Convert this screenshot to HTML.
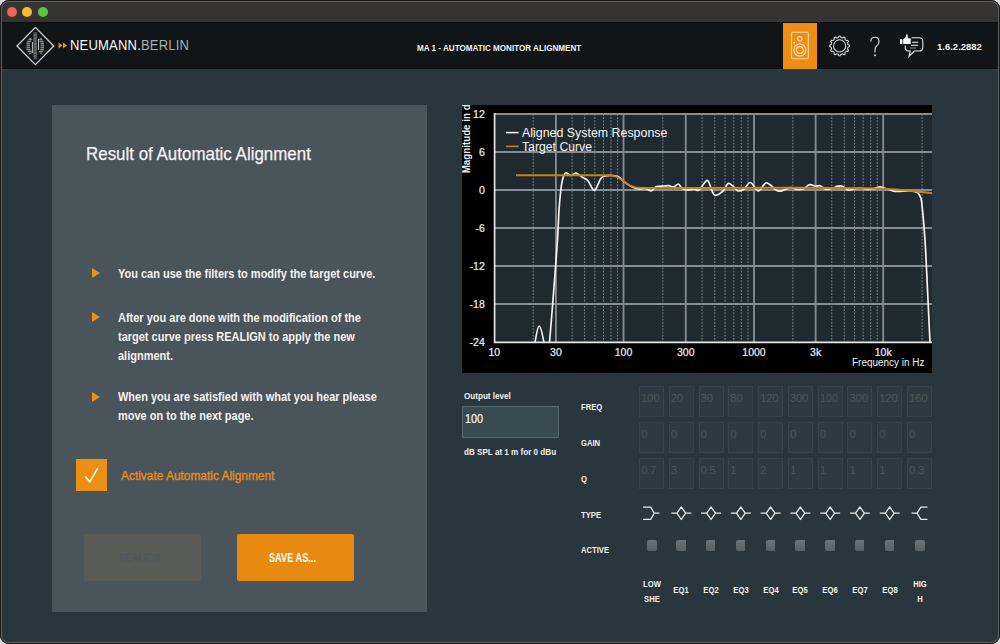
<!DOCTYPE html>
<html><head><meta charset="utf-8">
<style>
*{margin:0;padding:0;box-sizing:border-box}
html,body{width:1000px;height:644px;overflow:hidden;background:#d9d9d9;font-family:"Liberation Sans",sans-serif}
.win{position:absolute;left:0;top:0;width:1000px;height:644px;background:#2a363e;border-radius:9px;overflow:hidden}
.frame{position:absolute;left:0;top:0;width:1000px;height:644px;border-radius:9px;box-shadow:inset 0 0 0 1px #1a1a1a,inset 0 0 0 2px #5a5f62}
.tb{position:absolute;left:0;top:0;width:1000px;height:23px;background:#363433;border-bottom:1px solid #0c0c0c}
.dot{position:absolute;top:6.8px;width:10px;height:10px;border-radius:50%}
.hd{position:absolute;left:0;top:23px;width:1000px;height:46px;background:#111518;box-shadow:inset 0 -1px 0 #0a0d0f,0 1.5px 0 #2f3b42}
.a{position:absolute;white-space:nowrap}
.s{display:inline-block;transform-origin:0 0}
.panel{position:absolute;left:52px;top:105px;width:375px;height:507px;background:#4a545b}
.w{color:#f2f2f2}
.box{position:absolute;width:25px;height:31px;background:#2d3a41;border:1px solid #37444b}
.box span{position:absolute;left:1px;top:4px;font-size:11.5px;line-height:14px;color:#4b575d;letter-spacing:-0.3px}
.lbl{position:absolute;font-size:9px;line-height:10px;font-weight:bold;color:#f0f0f0;white-space:nowrap}
.chk{position:absolute;top:539.5px;width:10.6px;height:11px;border-radius:2px;background:linear-gradient(#6b7479,#586166)}
.bl{position:absolute;width:30px;text-align:center;font-size:9px;line-height:10px;font-weight:bold;color:#f0f0f0}
.bt{position:absolute;font-size:13px;line-height:19.2px;font-weight:bold;color:#f2f2f2;white-space:nowrap}
.tri{position:absolute;left:92px;width:0;height:0;border-left:8px solid #ed8f13;border-top:5.6px solid transparent;border-bottom:5.6px solid transparent}
</style></head><body>
<div class="win">
  <div class="tb">
    <div class="dot" style="left:6.8px;background:#f0625a"></div>
    <div class="dot" style="left:22.3px;background:#f8bb32"></div>
    <div class="dot" style="left:37.8px;background:#5ec440"></div>
  </div>
  <div class="hd">
    <!-- logo -->
    <svg class="a" style="left:14px;top:4px" width="44" height="40" viewBox="14 27 44 40">
      <path d="M35.4 27.4 L53.8 46 L35.4 64.6 L17 46 Z" fill="none" stroke="#cdcdcd" stroke-width="1.35"/>
      <g fill="none" stroke="#8a8a8a" stroke-width="3.4" stroke-linejoin="miter">
        <path d="M31.2 38.6 L28.2 42.6 L28.2 49.4 L31.2 53.4"/>
        <path d="M39.8 38.6 L42.3 42.6 L42.3 49.4 L39.8 53.4"/>
      </g>
      <g stroke="#1a1a1a" stroke-width="0.6">
        <path d="M26 40.5h7M26 42.5h7M26 44.5h7M26 46.5h7M26 48.5h7M26 50.5h7M26 52.5h7M38 40.5h7M38 42.5h7M38 44.5h7M38 46.5h7M38 48.5h7M38 50.5h7M38 52.5h7"/>
      </g>
      <rect x="33.3" y="32.2" width="3.8" height="27.2" fill="#505050"/>
      <g stroke="#9a9a9a" stroke-width="0.7">
        <path d="M33.9 35h2.6M33.9 38h2.6M34.4 41h1.6M33.9 44h2.6M33.9 47h2.6M34.4 50h1.6M33.9 53h2.6M33.9 56h2.6"/>
      </g>
      <path d="M32.4 42 V53 M38.5 39 V50" stroke="#d8d8d8" stroke-width="0.9"/>
    </svg>
    <svg class="a" style="left:58px;top:19px" width="10" height="8" viewBox="0 0 10 8">
      <path d="M0.5 0.5 L4.5 3.5 L0.5 6.5Z M5 0.5 L9 3.5 L5 6.5Z" fill="#f0900c"/>
    </svg>
    <div class="a" style="left:70px;top:14px;font-size:14px;line-height:16px;letter-spacing:0.2px"><span class="s" id="logo" style="transform:scaleX(0.93)"><span style="color:#f4f4f4">NEUMANN.</span><span style="color:#a9aeb1">BERLIN</span></span></div>
    <div class="a" style="left:417px;top:19.6px;font-size:9px;line-height:10px;font-weight:bold;color:#f2f2f2"><span class="s" style="transform:scaleX(0.9)">MA 1 - AUTOMATIC MONITOR ALIGNMENT</span></div>
    <!-- speaker tab -->
    <div class="a" style="left:783px;top:0;width:34px;height:46px;background:#ed8e12"></div>
    <svg class="a" style="left:783px;top:0" width="34" height="46" viewBox="783 23 34 46">
      <g fill="none" stroke="#f8dcb6" stroke-width="1.1">
        <rect x="791.5" y="32.3" width="16.8" height="26.4" rx="1.2"/>
        <circle cx="799.8" cy="38.7" r="2.2"/>
        <circle cx="799.8" cy="50" r="6"/>
        <circle cx="799.8" cy="50" r="3.4"/>
      </g>
      <circle cx="794.2" cy="42.6" r="0.9" fill="#fff"/>
    </svg>
    <!-- gear -->
    <svg class="a" style="left:826px;top:10px" width="28" height="28" viewBox="825.3 33 28 28" id="gear"><path d="M836.70 37.69 L837.57 37.50 L838.28 36.02 L839.52 36.02 L840.23 37.50 L841.10 37.69 L841.95 37.96 L843.30 37.03 L844.38 37.65 L844.25 39.29 L844.91 39.89 L845.51 40.55 L847.15 40.42 L847.77 41.50 L846.84 42.85 L847.11 43.70 L847.30 44.57 L848.78 45.28 L848.78 46.52 L847.30 47.23 L847.11 48.10 L846.84 48.95 L847.77 50.30 L847.15 51.38 L845.51 51.25 L844.91 51.91 L844.25 52.51 L844.38 54.15 L843.30 54.77 L841.95 53.84 L841.10 54.11 L840.23 54.30 L839.52 55.78 L838.28 55.78 L837.57 54.30 L836.70 54.11 L835.85 53.84 L834.50 54.77 L833.42 54.15 L833.55 52.51 L832.89 51.91 L832.29 51.25 L830.65 51.38 L830.03 50.30 L830.96 48.95 L830.69 48.10 L830.50 47.23 L829.02 46.52 L829.02 45.28 L830.50 44.57 L830.69 43.70 L830.96 42.85 L830.03 41.50 L830.65 40.42 L832.29 40.55 L832.89 39.89 L833.55 39.29 L833.42 37.65 L834.50 37.03 L835.85 37.96Z" fill="none" stroke="#d6d6d6" stroke-width="1.1" stroke-linejoin="round"/><circle cx="838.9" cy="45.9" r="6.1" fill="none" stroke="#d6d6d6" stroke-width="1.1"/></svg>
    <svg class="a" style="left:866px;top:10px" width="18" height="26" viewBox="866 33 18 26"><path d="M870.9 41.2 Q870.9 37.2 874.9 37.2 Q879 37.2 879 41.4 Q879 44.2 876.6 46 Q875 47.2 875 49.6 V52" fill="none" stroke="#dadada" stroke-width="1.15" stroke-linecap="round"/><circle cx="875" cy="55.2" r="0.95" fill="#e0e0e0"/></svg>
    <!-- thumbs chat -->
    <svg class="a" style="left:898px;top:9px" width="28" height="28" viewBox="898 32 28 28">
      <path d="M900 39.2h2.4v4.8h-2.4z" fill="#fff"/>
      <path d="M903.2 44 V39.2 L905.8 37 L906.3 34.3 L907.6 34.5 L907.8 38.2 L910.8 38.6 L910.6 44 Z" fill="#fff"/>
      <path d="M911.5 37.8 H919.2 Q922.8 37.8 922.8 41.4 V47.4 Q922.8 51 919.2 51 H914.3 L909 56.4 L910.3 51 H908.9 Q905.3 51 905.3 47.4 V45.6" fill="none" stroke="#e6e6e6" stroke-width="1.1"/>
      <path d="M912.2 42.3h6M911 45.2h7.2" stroke="#fff" stroke-width="1.1"/>
      <path d="M909.6 48h6.6" stroke="#888" stroke-width="1.1"/>
    </svg>
    <div class="a" style="left:937px;top:19px;font-size:9.5px;line-height:10px;font-weight:bold;color:#f2f2f2">1.6.2.2882</div>
  </div>

  <!-- panel -->
  <div class="panel"></div>
  <div class="a" style="left:85.5px;top:144.2px;font-size:18.5px;line-height:20px;color:#f2f2f2;-webkit-text-stroke:0.25px #f2f2f2"><span class="s" style="transform:scaleX(0.915)">Result of Automatic Alignment</span></div>
  <div class="tri" style="top:268.2px"></div>
  <div class="tri" style="top:312px"></div>
  <div class="tri" style="top:391.6px"></div>
  <div class="bt" style="left:117.6px;top:264px"><span class="s" style="transform:scaleX(0.845)">You can use the filters to modify the target curve.</span></div>
  <div class="bt" style="left:117.6px;top:307.7px"><span class="s" style="transform:scaleX(0.845)">After you are done with the modification of the<br>target curve press REALIGN to apply the new<br>alignment.</span></div>
  <div class="bt" style="left:117.6px;top:387.2px"><span class="s" style="transform:scaleX(0.845)">When you are satisfied with what you hear please<br>move on to the next page.</span></div>
  <div class="a" style="left:75.6px;top:459px;width:31.4px;height:31.5px;background:#ed8f13"></div>
  <svg class="a" style="left:76px;top:460px" width="31" height="31" viewBox="76 460 31 31"><path d="M85.2 476.6 L89.8 481.8 L97.6 468.3" fill="none" stroke="#fff" stroke-width="1.5"/></svg>
  <div class="a" style="left:121px;top:468px;font-size:13px;line-height:16px;color:#e98d14;-webkit-text-stroke:0.35px #e98d14"><span class="s" style="transform:scaleX(0.915)">Activate Automatic Alignment</span></div>
  <div class="a" style="left:84px;top:534px;width:116.5px;height:46.5px;background:#595b56;border-radius:1px"></div>
  <div class="a" style="left:119.4px;top:551px;font-size:12px;line-height:14px;font-weight:bold;color:#4f575c"><span class="s" style="transform:scaleX(0.76)">REALIGN</span></div>
  <div class="a" style="left:236.5px;top:534px;width:117px;height:46.7px;background:#e98a10;border-radius:2px"></div>
  <div class="a" style="left:268.7px;top:551px;font-size:12px;line-height:14px;font-weight:bold;color:#fff"><span class="s" style="transform:scaleX(0.765)">SAVE AS...</span></div>

  <svg class="a" style="left:462px;top:105px" width="470" height="268" viewBox="462 105 470 268">
<rect x="462" y="105" width="470" height="268" fill="#000"/>
<rect x="494.5" y="113.5" width="437.5" height="228.5" fill="#1f2930"/>
<line x1="533.19" y1="114" x2="533.19" y2="342" stroke="#a6acaf" stroke-width="1" stroke-dasharray="1.8 1.4" opacity="0.7"/>
<line x1="572.09" y1="114" x2="572.09" y2="342" stroke="#a6acaf" stroke-width="1" stroke-dasharray="1.8 1.4" opacity="0.7"/>
<line x1="584.61" y1="114" x2="584.61" y2="342" stroke="#a6acaf" stroke-width="1" stroke-dasharray="1.8 1.4" opacity="0.7"/>
<line x1="594.84" y1="114" x2="594.84" y2="342" stroke="#a6acaf" stroke-width="1" stroke-dasharray="1.8 1.4" opacity="0.7"/>
<line x1="603.49" y1="114" x2="603.49" y2="342" stroke="#a6acaf" stroke-width="1" stroke-dasharray="1.8 1.4" opacity="0.7"/>
<line x1="610.98" y1="114" x2="610.98" y2="342" stroke="#a6acaf" stroke-width="1" stroke-dasharray="1.8 1.4" opacity="0.7"/>
<line x1="617.59" y1="114" x2="617.59" y2="342" stroke="#a6acaf" stroke-width="1" stroke-dasharray="1.8 1.4" opacity="0.7"/>
<line x1="662.78" y1="114" x2="662.78" y2="342" stroke="#a6acaf" stroke-width="1" stroke-dasharray="1.8 1.4" opacity="0.7"/>
<line x1="702.07" y1="114" x2="702.07" y2="342" stroke="#a6acaf" stroke-width="1" stroke-dasharray="1.8 1.4" opacity="0.7"/>
<line x1="714.72" y1="114" x2="714.72" y2="342" stroke="#a6acaf" stroke-width="1" stroke-dasharray="1.8 1.4" opacity="0.7"/>
<line x1="725.05" y1="114" x2="725.05" y2="342" stroke="#a6acaf" stroke-width="1" stroke-dasharray="1.8 1.4" opacity="0.7"/>
<line x1="733.79" y1="114" x2="733.79" y2="342" stroke="#a6acaf" stroke-width="1" stroke-dasharray="1.8 1.4" opacity="0.7"/>
<line x1="741.35" y1="114" x2="741.35" y2="342" stroke="#a6acaf" stroke-width="1" stroke-dasharray="1.8 1.4" opacity="0.7"/>
<line x1="748.03" y1="114" x2="748.03" y2="342" stroke="#a6acaf" stroke-width="1" stroke-dasharray="1.8 1.4" opacity="0.7"/>
<line x1="792.89" y1="114" x2="792.89" y2="342" stroke="#a6acaf" stroke-width="1" stroke-dasharray="1.8 1.4" opacity="0.7"/>
<line x1="831.79" y1="114" x2="831.79" y2="342" stroke="#a6acaf" stroke-width="1" stroke-dasharray="1.8 1.4" opacity="0.7"/>
<line x1="844.31" y1="114" x2="844.31" y2="342" stroke="#a6acaf" stroke-width="1" stroke-dasharray="1.8 1.4" opacity="0.7"/>
<line x1="854.54" y1="114" x2="854.54" y2="342" stroke="#a6acaf" stroke-width="1" stroke-dasharray="1.8 1.4" opacity="0.7"/>
<line x1="863.19" y1="114" x2="863.19" y2="342" stroke="#a6acaf" stroke-width="1" stroke-dasharray="1.8 1.4" opacity="0.7"/>
<line x1="870.68" y1="114" x2="870.68" y2="342" stroke="#a6acaf" stroke-width="1" stroke-dasharray="1.8 1.4" opacity="0.7"/>
<line x1="877.29" y1="114" x2="877.29" y2="342" stroke="#a6acaf" stroke-width="1" stroke-dasharray="1.8 1.4" opacity="0.7"/>
<line x1="922.09" y1="114" x2="922.09" y2="342" stroke="#a6acaf" stroke-width="1" stroke-dasharray="1.8 1.4" opacity="0.7"/>
<line x1="555.94" y1="113" x2="555.94" y2="342" stroke="#838a8d" stroke-width="1.9"/>
<line x1="623.50" y1="113" x2="623.50" y2="342" stroke="#838a8d" stroke-width="1.9"/>
<line x1="685.76" y1="113" x2="685.76" y2="342" stroke="#838a8d" stroke-width="1.9"/>
<line x1="754.00" y1="113" x2="754.00" y2="342" stroke="#838a8d" stroke-width="1.9"/>
<line x1="815.64" y1="113" x2="815.64" y2="342" stroke="#838a8d" stroke-width="1.9"/>
<line x1="883.20" y1="113" x2="883.20" y2="342" stroke="#838a8d" stroke-width="1.9"/>
<line x1="494.5" y1="114.00" x2="932" y2="114.00" stroke="#868d90" stroke-width="1.9"/>
<line x1="494.5" y1="152.00" x2="932" y2="152.00" stroke="#868d90" stroke-width="1.9"/>
<line x1="494.5" y1="228.00" x2="932" y2="228.00" stroke="#868d90" stroke-width="1.9"/>
<line x1="494.5" y1="266.00" x2="932" y2="266.00" stroke="#868d90" stroke-width="1.9"/>
<line x1="494.5" y1="304.00" x2="932" y2="304.00" stroke="#868d90" stroke-width="1.9"/>
<line x1="494.5" y1="190" x2="932" y2="190" stroke="#868d90" stroke-width="1.9"/>
<line x1="494.6" y1="113" x2="494.6" y2="343" stroke="#e6e6e6" stroke-width="1.7"/>
<line x1="494" y1="342.3" x2="932" y2="342.3" stroke="#e6e6e6" stroke-width="1.7"/>
<path d="M549.50 342.50 C550.08 335.42 551.67 317.08 553.00 300.00 C554.33 282.92 556.50 255.00 557.50 240.00 C558.50 225.00 558.33 219.17 559.00 210.00 C559.67 200.83 560.67 190.83 561.50 185.00 C562.33 179.17 563.25 177.03 564.00 175.00 C564.75 172.97 564.83 172.72 566.00 172.80 C567.17 172.88 569.33 175.47 571.00 175.50 C572.67 175.53 574.00 172.65 576.00 173.00 C578.00 173.35 581.00 176.30 583.00 177.60 C585.00 178.90 586.10 178.67 588.00 180.80 C589.90 182.93 592.27 190.80 594.40 190.40 C596.53 190.00 598.93 180.80 600.80 178.40 C602.67 176.00 603.73 176.48 605.60 176.00 C607.47 175.52 609.87 175.37 612.00 175.50 C614.13 175.63 616.27 175.65 618.40 176.80 C620.53 177.95 622.40 180.67 624.80 182.40 C627.20 184.13 630.27 186.07 632.80 187.20 C635.33 188.33 638.00 189.00 640.00 189.20 C642.00 189.40 642.93 188.13 644.80 188.40 C646.67 188.67 649.33 191.07 651.20 190.80 C653.07 190.53 653.87 187.60 656.00 186.80 C658.13 186.00 661.87 186.18 664.00 186.00 C666.13 185.82 667.20 185.57 668.80 185.70 C670.40 185.83 672.00 187.08 673.60 186.80 C675.20 186.52 677.07 183.80 678.40 184.00 C679.73 184.20 680.27 187.00 681.60 188.00 C682.93 189.00 684.27 189.80 686.40 190.00 C688.53 190.20 692.27 189.20 694.40 189.20 C696.53 189.20 697.07 191.47 699.20 190.00 C701.33 188.53 705.07 180.27 707.20 180.40 C709.33 180.53 710.67 188.32 712.00 190.80 C713.33 193.28 713.33 195.30 715.20 195.30 C717.07 195.30 721.07 192.75 723.20 190.80 C725.33 188.85 726.40 184.40 728.00 183.60 C729.60 182.80 731.20 184.80 732.80 186.00 C734.40 187.20 735.73 190.27 737.60 190.80 C739.47 191.33 741.87 190.58 744.00 189.20 C746.13 187.82 748.00 182.23 750.40 182.50 C752.80 182.77 755.73 190.75 758.40 190.80 C761.07 190.85 763.47 182.93 766.40 182.80 C769.33 182.67 773.60 188.62 776.00 190.00 C778.40 191.38 778.40 191.50 780.80 191.10 C783.20 190.70 787.62 187.87 790.40 187.60 C793.18 187.33 795.32 189.32 797.50 189.50 C799.68 189.68 801.50 189.50 803.50 188.70 C805.50 187.90 807.50 185.12 809.50 184.70 C811.50 184.28 813.75 186.03 815.50 186.20 C817.25 186.37 818.25 185.20 820.00 185.70 C821.75 186.20 824.00 188.77 826.00 189.20 C828.00 189.63 830.00 188.80 832.00 188.30 C834.00 187.80 836.25 186.55 838.00 186.20 C839.75 185.85 840.75 185.53 842.50 186.20 C844.25 186.87 846.50 189.78 848.50 190.20 C850.50 190.62 852.25 189.02 854.50 188.70 C856.75 188.38 859.75 188.17 862.00 188.30 C864.25 188.43 866.00 189.43 868.00 189.50 C870.00 189.57 872.00 189.13 874.00 188.70 C876.00 188.27 878.00 186.90 880.00 186.90 C882.00 186.90 883.50 187.97 886.00 188.70 C888.50 189.43 891.00 190.92 895.00 191.30 C899.00 191.68 906.27 190.80 910.00 191.00 C913.73 191.20 915.67 191.50 917.40 192.50 C919.13 193.50 919.63 194.92 920.40 197.00 C921.17 199.08 921.23 197.83 922.00 205.00 C922.77 212.17 924.00 224.17 925.00 240.00 C926.00 255.83 927.17 282.92 928.00 300.00 C928.83 317.08 929.67 335.42 930.00 342.50" fill="none" stroke="#f4f4f4" stroke-width="1.7"/>
<path d="M516.00 175.20 C523.33 175.20 545.00 175.20 560.00 175.20 C575.00 175.20 597.33 175.13 606.00 175.20 C614.67 175.27 610.00 175.22 612.00 175.60 C614.00 175.98 616.00 176.52 618.00 177.50 C620.00 178.48 622.00 180.17 624.00 181.50 C626.00 182.83 628.00 184.52 630.00 185.50 C632.00 186.48 633.50 187.00 636.00 187.40 C638.50 187.80 634.33 187.80 645.00 187.90 C655.67 188.00 675.83 188.03 700.00 188.00 C724.17 187.97 759.50 187.58 790.00 187.70 C820.50 187.82 859.33 187.78 883.00 188.70 C906.67 189.62 923.83 192.45 932.00 193.20" fill="none" stroke="#c98119" stroke-width="1.9"/>
<path d="M535 342.5 C536.5 335 537.5 326 539.2 326 C541 326 542.5 335 544 342.5" fill="none" stroke="#f4f4f4" stroke-width="1.6"/>
<line x1="506" y1="132.6" x2="518.6" y2="132.6" stroke="#f4f4f4" stroke-width="1.6"/>
<line x1="506" y1="146.4" x2="518.6" y2="146.4" stroke="#c98119" stroke-width="1.6"/>
<text x="522" y="137.4" font-size="13" fill="#f4f4f4" textLength="145.4" lengthAdjust="spacingAndGlyphs">Aligned System Response</text>
<text x="522" y="150.6" font-size="13" fill="#f4f4f4" textLength="70" lengthAdjust="spacingAndGlyphs">Target Curve</text>
<text x="484.8" y="117.80" font-size="10.5" fill="#f0f0f0" stroke="#f0f0f0" stroke-width="0.2" text-anchor="end">12</text>
<text x="484.8" y="155.80" font-size="10.5" fill="#f0f0f0" stroke="#f0f0f0" stroke-width="0.2" text-anchor="end">6</text>
<text x="484.8" y="193.80" font-size="10.5" fill="#f0f0f0" stroke="#f0f0f0" stroke-width="0.2" text-anchor="end">0</text>
<text x="484.8" y="231.80" font-size="10.5" fill="#f0f0f0" stroke="#f0f0f0" stroke-width="0.2" text-anchor="end">-6</text>
<text x="484.8" y="269.80" font-size="10.5" fill="#f0f0f0" stroke="#f0f0f0" stroke-width="0.2" text-anchor="end">-12</text>
<text x="484.8" y="307.80" font-size="10.5" fill="#f0f0f0" stroke="#f0f0f0" stroke-width="0.2" text-anchor="end">-18</text>
<text x="484.8" y="345.80" font-size="10.5" fill="#f0f0f0" stroke="#f0f0f0" stroke-width="0.2" text-anchor="end">-24</text>
<text x="494.30" y="356.3" font-size="10.5" fill="#f0f0f0" stroke="#f0f0f0" stroke-width="0.2" text-anchor="middle">10</text>
<text x="555.94" y="356.3" font-size="10.5" fill="#f0f0f0" stroke="#f0f0f0" stroke-width="0.2" text-anchor="middle">30</text>
<text x="623.50" y="356.3" font-size="10.5" fill="#f0f0f0" stroke="#f0f0f0" stroke-width="0.2" text-anchor="middle">100</text>
<text x="685.76" y="356.3" font-size="10.5" fill="#f0f0f0" stroke="#f0f0f0" stroke-width="0.2" text-anchor="middle">300</text>
<text x="754.00" y="356.3" font-size="10.5" fill="#f0f0f0" stroke="#f0f0f0" stroke-width="0.2" text-anchor="middle">1000</text>
<text x="815.64" y="356.3" font-size="10.5" fill="#f0f0f0" stroke="#f0f0f0" stroke-width="0.2" text-anchor="middle">3k</text>
<text x="883.20" y="356.3" font-size="10.5" fill="#f0f0f0" stroke="#f0f0f0" stroke-width="0.2" text-anchor="middle">10k</text>
<text x="924.5" y="366.3" font-size="10" fill="#f0f0f0" text-anchor="end" textLength="72.5" lengthAdjust="spacingAndGlyphs">Frequency in Hz</text>
<text transform="translate(470.3 173.3) rotate(-90)" font-size="10.2" font-weight="bold" fill="#f0f0f0" textLength="76" lengthAdjust="spacingAndGlyphs">Magnitude in dB</text>
<rect x="455" y="98" width="20" height="7" fill="#2a363e"/>
</svg>

  <div class="a" style="left:464.3px;top:391.2px;font-size:9px;line-height:10px;font-weight:bold;color:#f0f0f0"><span class="s" style="transform:scaleX(0.9)">Output level</span></div>
  <div class="a" style="left:462px;top:406px;width:97px;height:31.5px;background:#3a4a51;border:1.5px solid #566870"></div>
  <div class="a" style="left:465.3px;top:411.8px;font-size:12px;line-height:14px;color:#f8f8f8;-webkit-text-stroke:0.2px #f8f8f8"><span class="s" style="transform:scaleX(0.9)">100</span></div>
  <div class="a" style="left:464.3px;top:447.2px;font-size:9px;line-height:10px;font-weight:bold;color:#f0f0f0"><span class="s" style="transform:scaleX(0.9)">dB SPL at 1 m for 0 dBu</span></div>

  <div class="box" style="left:639.00px;top:386.0px"><span>100</span></div>
<div class="box" style="left:668.78px;top:386.0px"><span>20</span></div>
<div class="box" style="left:698.56px;top:386.0px"><span>30</span></div>
<div class="box" style="left:728.34px;top:386.0px"><span>80</span></div>
<div class="box" style="left:758.12px;top:386.0px"><span>120</span></div>
<div class="box" style="left:787.90px;top:386.0px"><span>300</span></div>
<div class="box" style="left:817.68px;top:386.0px"><span>100</span></div>
<div class="box" style="left:847.46px;top:386.0px"><span>300</span></div>
<div class="box" style="left:877.24px;top:386.0px"><span>120</span></div>
<div class="box" style="left:907.02px;top:386.0px"><span>160</span></div>
<div class="box" style="left:639.00px;top:422.0px"><span>0</span></div>
<div class="box" style="left:668.78px;top:422.0px"><span>0</span></div>
<div class="box" style="left:698.56px;top:422.0px"><span>0</span></div>
<div class="box" style="left:728.34px;top:422.0px"><span>0</span></div>
<div class="box" style="left:758.12px;top:422.0px"><span>0</span></div>
<div class="box" style="left:787.90px;top:422.0px"><span>0</span></div>
<div class="box" style="left:817.68px;top:422.0px"><span>0</span></div>
<div class="box" style="left:847.46px;top:422.0px"><span>0</span></div>
<div class="box" style="left:877.24px;top:422.0px"><span>0</span></div>
<div class="box" style="left:907.02px;top:422.0px"><span>0</span></div>
<div class="box" style="left:639.00px;top:457.8px"><span>0.7</span></div>
<div class="box" style="left:668.78px;top:457.8px"><span>3</span></div>
<div class="box" style="left:698.56px;top:457.8px"><span>0.5</span></div>
<div class="box" style="left:728.34px;top:457.8px"><span>1</span></div>
<div class="box" style="left:758.12px;top:457.8px"><span>2</span></div>
<div class="box" style="left:787.90px;top:457.8px"><span>1</span></div>
<div class="box" style="left:817.68px;top:457.8px"><span>1</span></div>
<div class="box" style="left:847.46px;top:457.8px"><span>1</span></div>
<div class="box" style="left:877.24px;top:457.8px"><span>1</span></div>
<div class="box" style="left:907.02px;top:457.8px"><span>0.3</span></div>
<div class="lbl" style="left:580.5px;top:402.3px"><span class="s" style="transform:scaleX(0.85)">FREQ</span></div>
<div class="lbl" style="left:580.5px;top:437.8px"><span class="s" style="transform:scaleX(0.85)">GAIN</span></div>
<div class="lbl" style="left:580.5px;top:473.8px"><span class="s" style="transform:scaleX(0.85)">Q</span></div>
<div class="lbl" style="left:580.5px;top:509.5px"><span class="s" style="transform:scaleX(0.85)">TYPE</span></div>
<div class="lbl" style="left:580.5px;top:544.8px"><span class="s" style="transform:scaleX(0.85)">ACTIVE</span></div>
<svg class="a" style="left:630px;top:500px" width="310" height="30" viewBox="630 500 310 30"><g fill="none" stroke="#e8e8e8" stroke-width="1.3" stroke-linejoin="round"><path d="M643 507.1 H650.7 L654.2 513.2 H659.3 M654.2 513.2 L650.7 519.4 H643"/><path d="M671.28 513.2 H676.88 M676.88 513.2 L681.28 507 L685.68 513.2 L681.28 519.5 Z M685.68 513.2 H691.28"/><path d="M701.06 513.2 H706.66 M706.66 513.2 L711.06 507 L715.46 513.2 L711.06 519.5 Z M715.46 513.2 H721.06"/><path d="M730.84 513.2 H736.44 M736.44 513.2 L740.84 507 L745.24 513.2 L740.84 519.5 Z M745.24 513.2 H750.84"/><path d="M760.62 513.2 H766.22 M766.22 513.2 L770.62 507 L775.02 513.2 L770.62 519.5 Z M775.02 513.2 H780.62"/><path d="M790.40 513.2 H796.00 M796.00 513.2 L800.40 507 L804.80 513.2 L800.40 519.5 Z M804.80 513.2 H810.40"/><path d="M820.18 513.2 H825.78 M825.78 513.2 L830.18 507 L834.58 513.2 L830.18 519.5 Z M834.58 513.2 H840.18"/><path d="M849.96 513.2 H855.56 M855.56 513.2 L859.96 507 L864.36 513.2 L859.96 519.5 Z M864.36 513.2 H869.96"/><path d="M879.74 513.2 H885.34 M885.34 513.2 L889.74 507 L894.14 513.2 L889.74 519.5 Z M894.14 513.2 H899.74"/><path d="M911.52 513.2 H917.02 L920.82 507.1 H927.42 M917.02 513.2 L920.82 519.4 H927.42"/></g></svg>
<div class="chk" style="left:646.50px"></div>
<div class="chk" style="left:676.28px;width:9.4px;border-radius:2px 0 0 2px"></div>
<div class="chk" style="left:706.06px;width:9.4px;border-radius:2px 0 0 2px"></div>
<div class="chk" style="left:735.84px;width:9.4px;border-radius:2px 0 0 2px"></div>
<div class="chk" style="left:765.62px;width:9.4px;border-radius:2px 0 0 2px"></div>
<div class="chk" style="left:795.40px;width:9.4px;border-radius:2px 0 0 2px"></div>
<div class="chk" style="left:825.18px;width:9.4px;border-radius:2px 0 0 2px"></div>
<div class="chk" style="left:854.96px;width:9.4px;border-radius:2px 0 0 2px"></div>
<div class="chk" style="left:884.74px;width:9.4px;border-radius:2px 0 0 2px"></div>
<div class="chk" style="left:914.52px"></div>
<div class="bl" style="left:636.50px;top:576.5px;line-height:15.5px;transform:scaleX(0.85)">LOW<br>SHE</div>
<div class="bl" style="left:666.28px;top:584.5px;transform:scaleX(0.85)">EQ1</div>
<div class="bl" style="left:696.06px;top:584.5px;transform:scaleX(0.85)">EQ2</div>
<div class="bl" style="left:725.84px;top:584.5px;transform:scaleX(0.85)">EQ3</div>
<div class="bl" style="left:755.62px;top:584.5px;transform:scaleX(0.85)">EQ4</div>
<div class="bl" style="left:785.40px;top:584.5px;transform:scaleX(0.85)">EQ5</div>
<div class="bl" style="left:815.18px;top:584.5px;transform:scaleX(0.85)">EQ6</div>
<div class="bl" style="left:844.96px;top:584.5px;transform:scaleX(0.85)">EQ7</div>
<div class="bl" style="left:874.74px;top:584.5px;transform:scaleX(0.85)">EQ8</div>
<div class="bl" style="left:904.52px;top:576.5px;line-height:15.5px;transform:scaleX(0.85)">HIG<br>H</div>
</div>
<div class="frame"></div>
</body></html>
